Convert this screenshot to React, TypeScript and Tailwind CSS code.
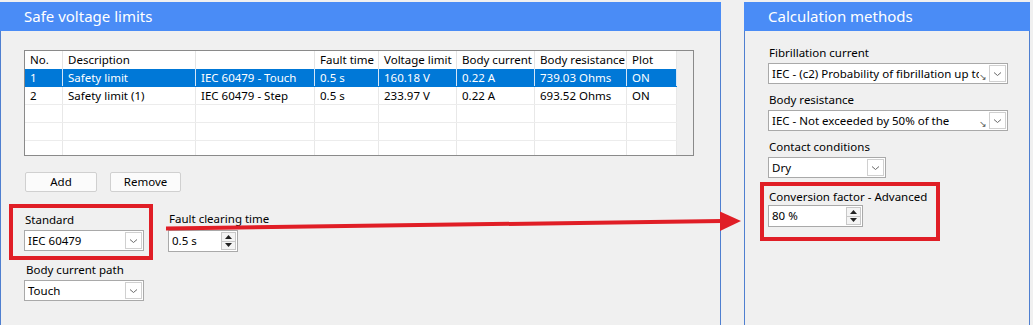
import React from "react";

const cols = [38, 133, 119, 64, 78, 78, 92, 50];
const header = ["No.", "Description", "", "Fault time", "Voltage limit", "Body current", "Body resistance", "Plot"];
const rows = [
  ["1", "Safety limit", "IEC 60479 - Touch", "0.5 s", "160.18 V", "0.22 A", "739.03 Ohms", "ON"],
  ["2", "Safety limit (1)", "IEC 60479 - Step", "0.5 s", "233.97 V", "0.22 A", "693.52 Ohms", "ON"],
  ["", "", "", "", "", "", "", ""],
  ["", "", "", "", "", "", "", ""],
  ["", "", "", "", "", "", "", ""],
];

function Chevron() {
  return (
    <svg width="9" height="6" viewBox="0 0 9 6">
      <path d="M1 1.5 L4.5 4.5 L8 1.5" fill="none" stroke="#6a6a6a" strokeWidth="1" />
    </svg>
  );
}

function Select({ className, text, mark }: { className: string; text: string; mark?: boolean }) {
  return (
    <div className={"relative flex h-[21px] items-center border border-[#a9a9a9] bg-white " + className}>
      <span className="min-w-0 flex-1 overflow-hidden whitespace-nowrap pl-[3px] leading-[19px]">{text}</span>
      {mark && (
        <span className="mb-[2px] mr-[2px] self-end text-[9px] leading-[9px] text-[#555]">↘</span>
      )}
      <div className="mr-[1px] flex h-[17px] w-[17px] shrink-0 items-center justify-center border border-[#d0d0d0] bg-white">
        <Chevron />
      </div>
    </div>
  );
}

function Spin({ className, text }: { className: string; text: string }) {
  return (
    <div className={"flex h-[22px] items-center border border-[#a9a9a9] bg-white " + className}>
      <span className="flex-1 pl-[3px] leading-[20px]">{text}</span>
      <div className="mr-[1px] flex h-[18px] w-[15px] flex-col border border-[#c8c8c8] bg-[#f4f4f4]">
        <div className="flex flex-1 items-center justify-center border-b border-[#c8c8c8]">
          <svg width="7" height="4" viewBox="0 0 7 4">
            <path d="M0 4 L3.5 0 L7 4 Z" fill="#222" />
          </svg>
        </div>
        <div className="flex flex-1 items-center justify-center">
          <svg width="7" height="4" viewBox="0 0 7 4">
            <path d="M0 0 L3.5 4 L7 0 Z" fill="#222" />
          </svg>
        </div>
      </div>
    </div>
  );
}

function Label({ children }: { children: React.ReactNode }) {
  return <div className="h-[16px] whitespace-nowrap leading-[16px]">{children}</div>;
}

export default function App() {
  return (
    <div className="relative h-[325px] w-[1033px] overflow-hidden bg-[#f0f0f0] pt-[2px] font-['Noto_Sans',sans-serif] text-[11.5px] text-black">
      <div className="flex h-full">
        {/* Left panel */}
        <div className="flex w-[721px] flex-col">
          <div className="h-[29px] bg-[#4a8cf6] pl-[24px] text-[15px] leading-[29px] text-white">
            Safe voltage limits
          </div>
          <div className="flex-1 border-l border-r border-[#4f7fd0] pl-[23px] pt-[19px]">
            {/* table */}
            <div className="h-[106px] w-[670px] overflow-hidden border border-[#8a8a8a] bg-[#f0f0f0]">
              <div className="flex h-[18px] w-[652px] bg-white">
                {header.map((h, i) => (
                  <div
                    key={i}
                    className="shrink-0 whitespace-nowrap border-r border-[#e4e4e4] pl-[5px] leading-[18px]"
                    style={{ width: cols[i] }}
                  >
                    {h}
                  </div>
                ))}
              </div>
              {rows.map((r, ri) => (
                <div
                  key={ri}
                  className={
                    "flex h-[18px] w-[652px] border-b " +
                    (ri === 0
                      ? "border-[#0078d7] bg-[#0078d7] text-white"
                      : "border-[#ececec] bg-white")
                  }
                >
                  {r.map((c, ci) => (
                    <div
                      key={ci}
                      className={
                        "shrink-0 whitespace-nowrap border-r pl-[5px] leading-[17px] " +
                        (ri === 0 ? "border-[#d6e6f6]" : "border-[#e8e8e8]")
                      }
                      style={{ width: cols[ci] }}
                    >
                      {c}
                    </div>
                  ))}
                </div>
              ))}
            </div>

            {/* buttons */}
            <div className="mt-[16px] flex gap-[13px] pl-[1px]">
              <div className="flex h-[20px] w-[72px] items-center justify-center rounded-[2px] border border-[#d0d0d0] bg-[#fbfbfb]">
                Add
              </div>
              <div className="flex h-[20px] w-[71px] items-center justify-center rounded-[2px] border border-[#d0d0d0] bg-[#fbfbfb]">
                Remove
              </div>
            </div>

            {/* standard + fault */}
            <div className="mt-[12px] flex items-start">
              <div className="-ml-[15px] h-[56px] w-[144px] border-[4px] border-[#e01e26] pl-[11px] pt-[4px]">
                <div className="mb-[2px] pl-[1px]">
                  <Label>Standard</Label>
                </div>
                <Select className="w-[120px]" text="IEC 60479" />
              </div>
              <div className="ml-[15px] pt-[7px]">
                <div className="mb-[3px] pl-[1px]">
                  <Label>Fault clearing time</Label>
                </div>
                <Spin className="w-[70px]" text="0.5 s" />
              </div>
            </div>

            <div className="mt-[2px]">
              <div className="mb-[2px] pl-[2px]">
                <Label>Body current path</Label>
              </div>
              <Select className="w-[120px]" text="Touch" />
            </div>
          </div>
        </div>

        <div className="w-[23px]" />

        {/* Right panel */}
        <div className="flex w-[286px] flex-col">
          <div className="h-[29px] bg-[#4a8cf6] pl-[24px] text-[15px] leading-[29px] text-white">
            Calculation methods
          </div>
          <div className="flex-1 border-l border-r border-[#4f7fd0] pl-[23px] pt-[14px]">
            <div className="mb-[2px] pl-[1px]">
              <Label>Fibrillation current</Label>
            </div>
            <Select className="w-[240px]" text="IEC - (c2) Probability of fibrillation up to" mark />

            <div className="mb-[2px] mt-[8px] pl-[1px]">
              <Label>Body resistance</Label>
            </div>
            <Select className="w-[240px]" text="IEC - Not exceeded by 50% of the" mark />

            <div className="mb-[2px] mt-[8px] pl-[1px]">
              <Label>Contact conditions</Label>
            </div>
            <Select className="w-[118px]" text="Dry" />

            <div className="-ml-[8px] mt-[4px] w-[180px] border-[4px] border-[#e01e26] pb-[10px] pl-[4px] pt-[3px]">
              <div className="pl-[1px]">
                <Label>Conversion factor - Advanced</Label>
              </div>
              <Spin className="w-[95px]" text="80 %" />
            </div>
          </div>
        </div>
      </div>

      {/* annotation arrow */}
      <svg
        className="pointer-events-none absolute left-0 top-0"
        width="1033"
        height="325"
        viewBox="0 0 1033 325"
      >
        <line x1="166" y1="228.5" x2="722" y2="221" stroke="#e01e26" strokeWidth="4" />
        <polygon points="720,211.5 741,221 720,231" fill="#e01e26" />
      </svg>
    </div>
  );
}
